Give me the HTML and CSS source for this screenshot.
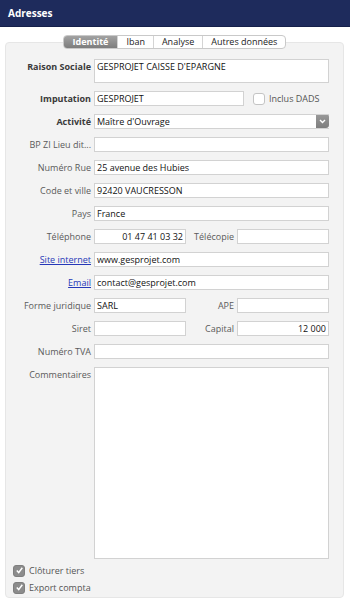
FILE: index.html
```html
<!DOCTYPE html>
<html lang="fr">
<head>
<meta charset="UTF-8">
<meta name="viewport" content="width=device-width, initial-scale=1.0">
<title>Adresses</title>
    <link rel="stylesheet" href="styles.css">
</head>
<body>
    <div class="title-bar">Adresses</div>

    <div class="content">
        <!-- onglets -->
        <div class="tabs">
            <span class="tab active">Identité</span>
            <span class="tab">Iban</span>
            <span class="tab">Analyse</span>
            <span class="tab">Autres données</span>
        </div>

        <div class="panel">
            <div class="form">
                <label class="lbl strong">Raison Sociale</label>
                <div class="field full tall">GESPROJET CAISSE D'EPARGNE</div>

                <label class="lbl strong">Imputation</label>
                <div class="full inline">
                    <div class="field imput">GESPROJET</div>
                    <span class="check"><span class="box"></span>Inclus DADS</span>
                </div>

                <label class="lbl strong">Activité</label>
                <div class="field full select">
                    <span>Maître d'Ouvrage</span>
                    <span class="arrow">
                        <svg width="7" height="5" viewBox="0 0 7 5"><path d="M1 1l2.5 2.5L6 1" fill="none" stroke="#fff" stroke-width="1.4"/></svg>
                    </span>
                </div>

                <label class="lbl">BP ZI Lieu dit...</label>
                <div class="field full"></div>

                <label class="lbl">Numéro Rue</label>
                <div class="field full">25 avenue des Hubies</div>

                <label class="lbl">Code et ville</label>
                <div class="field full">92420 VAUCRESSON</div>

                <label class="lbl">Pays</label>
                <div class="field full">France</div>

                <label class="lbl">Téléphone</label>
                <div class="field right">01 47 41 03 32</div>
                <label class="lbl">Télécopie</label>
                <div class="field"></div>

                <a class="lbl link" href="#">Site internet</a>
                <div class="field full">www.gesprojet.com</div>

                <a class="lbl link" href="#">Email</a>
                <div class="field full">contact@gesprojet.com</div>

                <label class="lbl">Forme juridique</label>
                <div class="field">SARL</div>
                <label class="lbl">APE</label>
                <div class="field"></div>

                <label class="lbl">Siret</label>
                <div class="field"></div>
                <label class="lbl">Capital</label>
                <div class="field right">12 000</div>

                <label class="lbl">Numéro TVA</label>
                <div class="field full"></div>

                <label class="lbl">Commentaires</label>
                <div class="field full comments"></div>
            </div>

            <div class="options">
                <span class="check"><span class="box checked"><svg width="9" height="9" viewBox="0 0 9 9"><path d="M1.8 4.6l1.9 2L7.3 1.8" fill="none" stroke="#fff" stroke-width="1.5"/></svg></span>Clôturer tiers</span>
                <span class="check"><span class="box checked"><svg width="9" height="9" viewBox="0 0 9 9"><path d="M1.8 4.6l1.9 2L7.3 1.8" fill="none" stroke="#fff" stroke-width="1.5"/></svg></span>Export compta</span>
            </div>
        </div>
    </div>
</body>
</html>
```

FILE: styles.css
```css
body {
    margin: 0;
    background: #fff;
    font-family: "Open Sans", "DejaVu Sans", sans-serif;
    font-size: 9px;
    color: #111;
}

/* barre de titre */
.title-bar {
    height: 26px;
    line-height: 26px;
    padding-left: 8px;
    background: #1e2b5c;
    border-bottom: 1px solid #15204a;
    color: #fff;
    font-weight: bold;
    font-size: 10px;
}

.content {
    padding: 8px 6px 0 5px;
}

/* onglets */
.tabs {
    position: relative;
    display: flex;
    width: max-content;
    margin: 0 auto -7px;
    border: 1px solid #c9c9c9;
    border-radius: 4px;
    background: #fff;
    overflow: hidden;
    z-index: 1;
}
.tab {
    height: 12px;
    line-height: 12px;
    padding: 0 8px;
    border-left: 1px solid #d4d4d4;
    color: #222;
}
.tab:first-child {
    border-left: none;
}
.tab.active {
    background: linear-gradient(#a2a2a2, #7d7d7d);
    color: #fff;
    font-weight: bold;
    padding: 0 9px;
}

/* panneau */
.panel {
    height: 556px;
    box-sizing: border-box;
    padding: 16px 14px 0 0;
    background: #f3f3f3;
    border: 1px solid #e6e6e6;
    border-radius: 4px;
    display: flex;
    flex-direction: column;
}

.form {
    display: grid;
    grid-template-columns: 85px 92px 45px 92px;
    column-gap: 3px;
    row-gap: 8px;
}
.lbl {
    text-align: right;
    color: #5a5a5a;
    line-height: 15px;
    white-space: nowrap;
}
.lbl.strong {
    color: #3a3a3a;
    font-weight: bold;
}
.lbl.link {
    color: #2638b8;
    text-decoration: underline;
}
.field {
    height: 15px;
    box-sizing: border-box;
    padding: 0 2px;
    line-height: 13px;
    background: #fff;
    border: 1px solid #d2d2d2;
    color: #111;
    white-space: nowrap;
    overflow: hidden;
}
.field.full {
    grid-column: 2 / 5;
}
.field.right {
    text-align: right;
}
.field.tall {
    height: 24px;
}
.field.comments {
    height: 192px;
}
.inline {
    grid-column: 2 / 5;
    display: flex;
    align-items: center;
    gap: 9px;
}
.field.imput {
    width: 150px;
}
.field.select {
    display: flex;
    justify-content: space-between;
    padding-right: 0;
    border-right: none;
}
.arrow {
    width: 13px;
    height: 14px;
    margin-top: -1px;
    border-radius: 0 3px 3px 0;
    background: linear-gradient(#9a9a9a, #7e7e7e);
    display: flex;
    align-items: center;
    justify-content: center;
}

/* cases à cocher */
.check {
    display: flex;
    align-items: center;
    gap: 4px;
    color: #555;
    line-height: 15px;
}
.box {
    width: 10px;
    height: 10px;
    border: 1px solid #c4c4c4;
    border-radius: 3px;
    background: #fff;
    display: flex;
    align-items: center;
    justify-content: center;
}
.box.checked {
    border-color: #7f7f7f;
    background: #8c8c8c;
}

.options {
    margin-top: 4px;
    padding-left: 7px;
    display: flex;
    flex-direction: column;
    gap: 2px;
}
```
